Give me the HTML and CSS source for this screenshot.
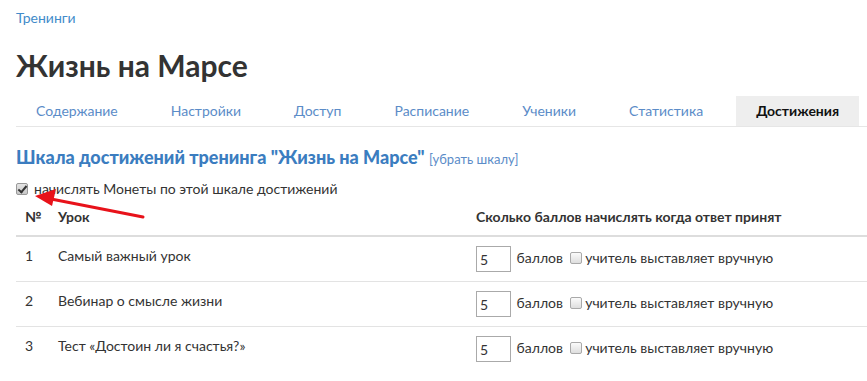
FILE: index.html
```html
<!DOCTYPE html>
<html>
<head>
    <title>Жизнь на Марсе - Достижения</title>
    <link rel="stylesheet" href="styles.css">
</head>
<body>
    <div class="page">
        <div class="crumbs"><a href="#">Тренинги</a></div>
        <h1>Жизнь на Марсе</h1>

        <ul class="tabs">
            <li><a href="#">Содержание</a></li>
            <li><a href="#">Настройки</a></li>
            <li><a href="#">Доступ</a></li>
            <li><a href="#">Расписание</a></li>
            <li><a href="#">Ученики</a></li>
            <li><a href="#">Статистика</a></li>
            <li class="active"><a href="#">Достижения</a></li>
        </ul>

        <h2>Шкала достижений тренинга "Жизнь на Марсе" <a class="small" href="#">[убрать шкалу]</a></h2>

        <label class="check-row">
            <input type="checkbox" class="cb" checked>
            начислять Монеты по этой шкале достижений
        </label>

        <table class="lessons">
            <thead>
                <tr>
                    <th class="num">№</th>
                    <th>Урок</th>
                    <th class="points">Сколько баллов начислять когда ответ принят</th>
                </tr>
            </thead>
            <tbody>
                <tr>
                    <td class="num">1</td>
                    <td>Самый важный урок</td>
                    <td class="points"><input type="text" class="score" value="5"> баллов <label class="manual"><input type="checkbox" class="cb"> учитель выставляет вручную</label></td>
                </tr>
                <tr>
                    <td class="num">2</td>
                    <td>Вебинар о смысле жизни</td>
                    <td class="points"><input type="text" class="score" value="5"> баллов <label class="manual"><input type="checkbox" class="cb"> учитель выставляет вручную</label></td>
                </tr>
                <tr>
                    <td class="num">3</td>
                    <td>Тест «Достоин ли я счастья?»</td>
                    <td class="points"><input type="text" class="score" value="5"> баллов <label class="manual"><input type="checkbox" class="cb"> учитель выставляет вручную</label></td>
                </tr>
            </tbody>
        </table>

        <!-- annotation arrow -->
        <svg class="arrow" width="130" height="40" viewBox="0 0 130 40">
            <line x1="127" y1="37" x2="30" y2="18" stroke="#e8121a" stroke-width="3" stroke-linecap="round"/>
            <polygon points="19,16 40,9 36,26" fill="#e8121a"/>
        </svg>
    </div>
</body>
</html>
```

FILE: styles.css
```css
body { margin: 0; font-family: Lato, "Open Sans", sans-serif; font-size: 14px; line-height: 20px; color: #333; background: #fff; }
a { color: #428bca; text-decoration: none; }
.page { position: relative; padding: 8px 0 0 16px; }
.crumbs { height: 20px; }
h1 { margin: 19px 0 13px; font-size: 30px; line-height: 36px; font-weight: bold; color: #333; }

.tabs { display: flex; margin: 0; padding: 0; list-style: none; border-bottom: 1px solid #e6e6e6; }
.tabs li { margin-right: 13px; }
.tabs a { display: block; padding: 5px 20px; line-height: 20px; color: #5b8cc8; }
.tabs .active a { background: #eee; color: #111; font-weight: bold; }

h2 { margin: 18px 0 8px; font-size: 18px; line-height: 24px; font-weight: 900; color: #3b7dc0; }
h2 .small { font-size: 13px; font-weight: normal; color: #5b8cc8; }

.check-row { display: flex; align-items: center; gap: 6px; height: 20px; }

.cb { appearance: none; -webkit-appearance: none; margin: 0; width: 12px; height: 12px; border: 1px solid #a9a9a9; border-radius: 2px; background: linear-gradient(#fbfbfb, #dedede); position: relative; vertical-align: -1px; }
.cb:checked { background: linear-gradient(#e4e4e4, #c8c8c8); border-color: #999; }
.cb:checked::after { content: ""; position: absolute; left: 3px; top: 0px; width: 3px; height: 7px; border: solid #333; border-width: 0 2px 2px 0; transform: rotate(40deg); }

.lessons { width: 100%; border-collapse: collapse; }
.lessons th, .lessons td { text-align: left; vertical-align: top; }
.lessons th { padding: 8px; font-weight: bold; color: #333; border-bottom: 2px solid #ddd; }
.lessons td { padding: 9px 8px; border-bottom: 1px solid #e3e3e3; }
.lessons tr:last-child td { border-bottom: none; }
.lessons .num { width: 17px; padding-left: 9px; }
.lessons .points { width: 383px; }

.score { width: 35px; height: 26px; box-sizing: border-box; padding: 2px 3px; border: 1px solid #aaa; font: inherit; color: #333; vertical-align: middle; margin-right: 2px; }
.manual { margin-left: 3px; }

.arrow { position: absolute; left: 16px; top: 180px; }
```
